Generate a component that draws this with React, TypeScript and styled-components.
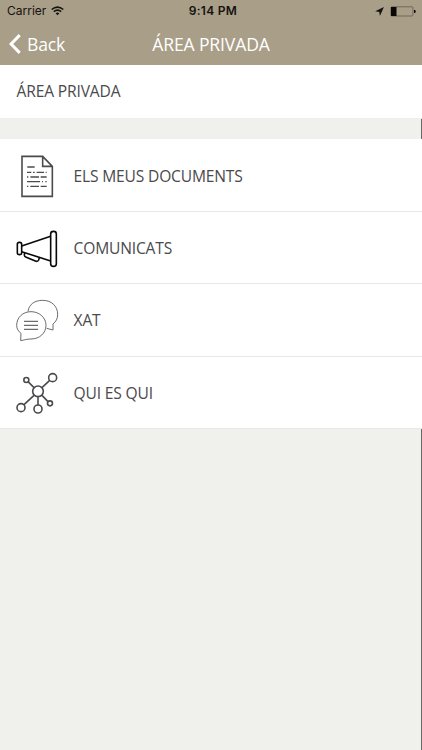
import React from "react";
import styled, { createGlobalStyle } from "styled-components";

const GlobalStyle = createGlobalStyle`
  * { box-sizing: border-box; }
  body { margin: 0; background: #f0f1ec; }
`;

const Screen = styled.div`
  display: flex;
  flex-direction: column;
  width: 422px;
  height: 750px;
  overflow: hidden;
  background: #f0f1ec;
  color: #4a4a4c;
  font-family: "Open Sans", sans-serif;
`;

const Header = styled.header`
  flex: none;
  height: 65px;
  background: #a99e88;
`;

const StatusBar = styled.div`
  display: grid;
  grid-template-columns: 1fr auto 1fr;
  align-items: center;
  height: 22px;
  padding: 0 6px 0 7px;
  color: #15130f;
  font: 12px/22px Inter, sans-serif;
`;

const Carrier = styled.div`
  display: flex;
  align-items: center;
  gap: 5px;
`;

const Clock = styled.div`
  font-weight: 600;
  letter-spacing: 0.3px;
  padding-left: 3px;
`;

const Indicators = styled.div`
  display: flex;
  justify-content: flex-end;
  align-items: center;
  gap: 6px;
`;

const NavBar = styled.nav`
  display: grid;
  grid-template-columns: 1fr auto 1fr;
  align-items: center;
  height: 43px;
  padding: 0 9px;
  color: #fff;
`;

const BackButton = styled.button`
  display: flex;
  align-items: center;
  gap: 6px;
  padding: 0;
  border: 0;
  background: none;
  color: inherit;
  font: 17.6px/24px "Open Sans", sans-serif;
  letter-spacing: -0.2px;
`;

const NavTitle = styled.h1`
  margin: 0;
  font-size: 17.6px;
  font-weight: 400;
  line-height: 24px;
  letter-spacing: -0.15px;
`;

const SectionTitle = styled.h2`
  flex: none;
  margin: 0;
  height: 54px;
  padding-left: 16.5px;
  background: #fff;
  border-bottom: 1px solid #eeeeeb;
  font-size: 15.6px;
  font-weight: 400;
  line-height: 53px;
  letter-spacing: -0.16px;
`;

const Spacer = styled.div<{ $grow?: boolean }>`
  flex: ${(p) => (p.$grow ? "1" : "0 0 20px")};
  border-right: 1px solid #686966;
`;

const Menu = styled.ul`
  flex: none;
  margin: 0;
  padding: 0;
  list-style: none;
`;

const MenuItem = styled.li`
  display: flex;
  align-items: center;
  height: 72.3px;
  background: #fff;
  border-bottom: 1px solid #e9e8e7;
  font-size: 15.6px;
  line-height: 22px;
  letter-spacing: -0.18px;

  &:first-child {
    height: 73px;
    padding-top: 1px;
  }
`;

const MenuIcon = styled.svg`
  flex: none;
  width: 70px;
  height: 72px;
  margin-right: 3.6px;
  fill: none;
  stroke: #4b4b4e;
  stroke-width: 4.8;
`;

const Label = styled.span`
  padding-top: 1px;
`;

const WifiIcon = () => (
  <svg width="13" height="10" viewBox="0 0 13 10" fill="none" stroke="#15130f" strokeWidth="1.6">
    <path d="M.7 3.5Q6.5-1.4 12.3 3.5M2.8 5.7Q6.5 2.5 10.2 5.7" />
    <path d="M4.6 7.3Q6.5 5.7 8.4 7.3L6.5 9.3Z" fill="#15130f" stroke="none" />
  </svg>
);

const LocationIcon = () => (
  <svg width="9" height="9" viewBox="0 0 9 9">
    <path d="M8.9.1 4.9 8.9 4.3 4.9.2 4.3Z" fill="#15130f" />
  </svg>
);

const BatteryIcon = () => (
  <svg width="26" height="11" viewBox="0 0 26 11">
    <rect x=".9" y=".8" width="22" height="9.2" rx="1" fill="none" stroke="#625c4e" strokeWidth=".8" />
    <path d="M1 1h5.5v9H1zM24 3.7q1.8.2 1.8 1.7T24 7.1z" fill="#090806" />
  </svg>
);

const BackIcon = () => (
  <svg width="12" height="20" viewBox="0 0 12 20" fill="none" stroke="#fff" strokeWidth="3">
    <path d="M10.7 1.1 2.1 10l8.6 8.9" />
  </svg>
);

const DocumentDrawing = () => (
  <>
    <path d="M66 49h62l29 30v90H66zM128 49v30h29" />
    <path
      strokeWidth="4"
      d="M82 81h22M81 97h13M99 97h5M110 97h22M137 97h3M81 111h4M91 111h26M122 111h18M81 125h39M126 125h3M136 125h4M81 139h4M91 139h26M122 139h18"
    />
  </>
);

const MegaphoneDrawing = () => (
  <g stroke="#09090b" strokeLinejoin="round">
    <rect x="152" y="58" width="17" height="105" rx="8" />
    <rect x="52" y="91" width="13" height="37" rx="6" />
    <path d="M65 102 152 73M65 119l87 28M74 123l-1 6q0 5 4 6l29 12q7 3 10-3l2-7" />
  </g>
);

const ChatDrawing = () => (
  <g stroke="#6c6c6e" strokeWidth="3">
    <path d="M84 82C87 61 104 49 128 49c27 0 45 18 45 42 0 13-5 22-14 29v18l-19-5" />
    <path d="M62 170l1-22c-8-6-13-14-13-24 0-23 18-41 43-41s45 18 45 41-19 41-45 41c-13 0-20 3-31 5z" />
    <path d="M72 112h42M72 124h42M72 136h42" strokeWidth="3.6" />
  </g>
);

const NetworkDrawing = () => (
  <>
    <circle cx="114" cy="106" r="16" />
    <circle cx="158" cy="65" r="12" />
    <circle cx="79" cy="72" r="7.5" />
    <circle cx="63" cy="155" r="12" />
    <circle cx="114" cy="159" r="12" />
    <circle cx="150" cy="142" r="7.5" />
    <path d="m84 77 18 18M126 95l23-22M102 118l-30 28M114 122v25M126 118l18 19" />
  </>
);

const items = [
  { label: "ELS MEUS DOCUMENTS", Drawing: DocumentDrawing },
  { label: "COMUNICATS", Drawing: MegaphoneDrawing },
  { label: "XAT", Drawing: ChatDrawing },
  { label: "QUI ES QUI", Drawing: NetworkDrawing },
];

export default function App() {
  return (
    <>
      <GlobalStyle />
      <Screen>
        <Header>
          <StatusBar>
            <Carrier>Carrier <WifiIcon /></Carrier>
            <Clock>9:14 PM</Clock>
            <Indicators><LocationIcon /><BatteryIcon /></Indicators>
          </StatusBar>
          <NavBar>
            <BackButton><BackIcon />Back</BackButton>
            <NavTitle>ÁREA PRIVADA</NavTitle>
          </NavBar>
        </Header>
        <SectionTitle>ÁREA PRIVADA</SectionTitle>
        <Spacer />
        <Menu>
          {items.map(({ label, Drawing }) => (
            <MenuItem key={label}>
              <MenuIcon viewBox="0 0 210 216"><Drawing /></MenuIcon>
              <Label>{label}</Label>
            </MenuItem>
          ))}
        </Menu>
        <Spacer $grow />
      </Screen>
    </>
  );
}
